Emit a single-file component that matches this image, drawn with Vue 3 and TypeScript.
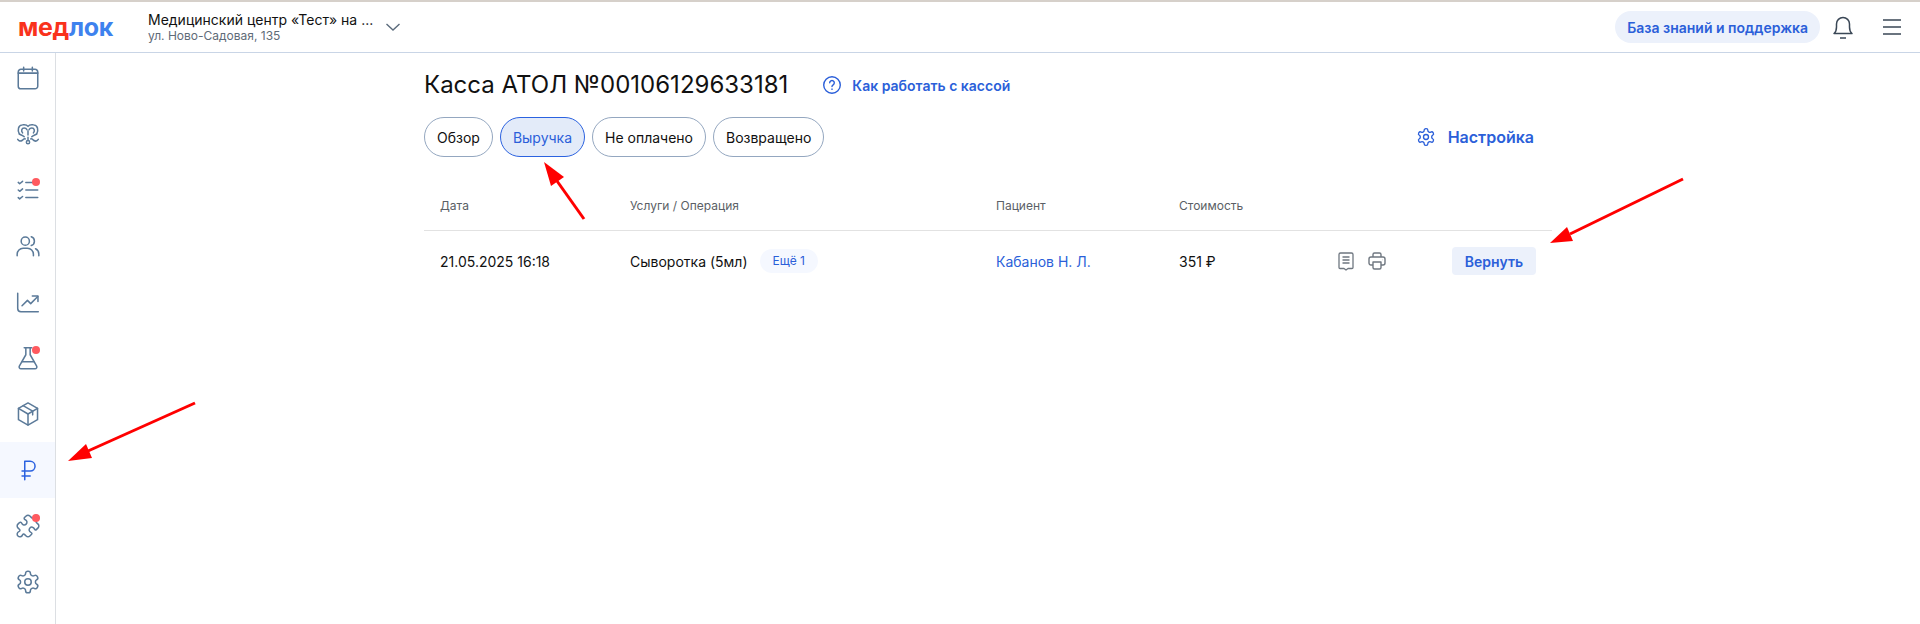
<template>
  <div class="page">
    <header class="topbar">
      <div class="logo"><span class="logo-red">мед</span><span class="logo-blue">лок</span></div>
      <div class="clinic">
        <div class="clinic-name">Медицинский центр «Тест» на ...</div>
        <div class="clinic-address">ул. Ново-Садовая, 135</div>
      </div>
      <svg class="chevron" width="16" height="10" viewBox="0 0 16 10" fill="none" stroke="#5b6b7c" stroke-width="1.4">
        <path d="M1.5 2l6.5 6 6.5-6" />
      </svg>
      <div class="topbar-right">
        <button class="help-pill">База знаний и поддержка</button>
        <svg class="bell" width="24" height="26" viewBox="0 0 24 26" fill="none" stroke="#3a4756" stroke-width="1.5">
          <path d="M3 19.5c2-1.500 2.500-3.500 2.500-6.500V10a6.500 6.500 0 0 1 13 0v3c0 3 .5 5 2.500 6.500z" stroke-linejoin="round" />
          <path d="M9 24h6" />
        </svg>
        <svg class="burger" width="18" height="16" viewBox="0 0 18 16" fill="none" stroke="#3a4756" stroke-width="1.500">
          <path d="M0 1h18M0 8h18M0 15h18" />
        </svg>
      </div>
    </header>

    <div class="body">
      <aside class="sidebar">
        <div v-for="item in navItems" :key="item.id" class="nav-item" :class="{ active: item.id === 'money' }">
          <svg width="26" height="26" viewBox="0 0 24 24" fill="none" stroke="currentColor" stroke-width="1.4" stroke-linecap="round" stroke-linejoin="round">
            <path v-for="d in item.paths" :key="d" :d="d" />
            <circle v-if="item.id === 'users'" cx="9.500" cy="7.500" r="3.800" />
            <circle v-if="item.id === 'gear'" cx="12" cy="12" r="3" />
          </svg>
          <span v-if="item.dot" class="dot"></span>
        </div>
      </aside>

      <main class="main">
        <div class="content">
          <div class="title-row">
            <h1>Касса АТОЛ №00106129633181</h1>
            <a class="how-link">
              <svg width="20" height="20" viewBox="0 0 20 20" fill="none" stroke="#2b5fd9" stroke-width="1.400">
                <circle cx="10" cy="10" r="8.300" />
                <path d="M7.700 7.800a2.300 2.300 0 1 1 3.500 2c-.8.500-1.200.9-1.200 1.800" stroke-linecap="round" />
                <path d="M10 14v.4" stroke-linecap="round" />
              </svg>
              Как работать с кассой
            </a>
          </div>

          <div class="tabs-row">
            <div class="tabs">
              <button v-for="tab in tabs" :key="tab" class="tab" :class="{ selected: tab === 'Выручка' }">{{ tab }}</button>
            </div>
            <a class="settings">
              <svg width="20" height="20" viewBox="0 0 24 24" fill="none" stroke="#2b5fd9" stroke-width="1.600" stroke-linejoin="round">
                <path :d="gearPath" />
                <circle cx="12" cy="12" r="3" />
              </svg>
              Настройка
            </a>
          </div>

          <div class="table">
            <div class="row head">
              <div>Дата</div>
              <div>Услуги / Операция</div>
              <div>Пациент</div>
              <div>Стоимость</div>
              <div></div>
              <div></div>
            </div>
            <div class="row">
              <div>21.05.2025 16:18</div>
              <div class="service">Сыворотка (5мл) <span class="more">Ещё 1</span></div>
              <div class="patient">Кабанов Н. Л.</div>
              <div>351 ₽</div>
              <div class="actions">
                <svg width="18" height="20" viewBox="0 0 18 20" fill="none" stroke="#6f7780" stroke-width="1.300" stroke-linejoin="round">
                  <path d="M3.500 2h11a1.500 1.500 0 0 1 1.500 1.500V16.500a1 1 0 0 1-1 1h-4L9 19l-2-1.500H3a1 1 0 0 1-1-1V3.500A1.500 1.500 0 0 1 3.500 2z" />
                  <path d="M5.500 6h7M5.500 9h7M5.500 12h7" />
                </svg>
                <svg width="18" height="20" viewBox="0 0 18 20" fill="none" stroke="#6f7780" stroke-width="1.400" stroke-linejoin="round">
                  <path d="M5 6V3.500A1.500 1.500 0 0 1 6.500 2h5A1.500 1.500 0 0 1 13 3.500V6" />
                  <path d="M5 14H3a2 2 0 0 1-2-2V8a2 2 0 0 1 2-2h12a2 2 0 0 1 2 2v4a2 2 0 0 1-2 2h-2" />
                  <path d="M5 11h8v5.500A1.500 1.500 0 0 1 11.500 18h-5A1.500 1.500 0 0 1 5 16.500z" />
                  <path d="M14 8.800h.2" />
                </svg>
              </div>
              <div class="refund-cell"><button class="refund">Вернуть</button></div>
            </div>
          </div>
        </div>
      </main>
    </div>

    <!-- красные стрелки поверх скриншота -->
    <svg class="arrows" width="1920" height="624" viewBox="0 0 1920 624">
      <g fill="#ff0000" stroke="none">
        <path d="M68 461l18-17 6 14z" />
        <path d="M544 162l20 15-13 9z" />
        <path d="M1550 243l17-16 6 14z" />
      </g>
      <g stroke="#ff0000" stroke-width="3" fill="none">
        <path d="M195 403L88 451" />
        <path d="M584 219L557 181" />
        <path d="M1683 179L1570 234" />
      </g>
    </svg>
  </div>
</template>

<script setup lang="ts">
interface NavItem {
  id: string
  paths: string[]
  dot?: boolean
}

const gearPath =
  'M12.220 2h-.44a2 2 0 0 0-2 2v.18a2 2 0 0 1-1 1.730l-.43.25a2 2 0 0 1-2 0l-.15-.08a2 2 0 0 0-2.730.73l-.22.38a2 2 0 0 0 .73 2.730l.15.1a2 2 0 0 1 1 1.720v.51a2 2 0 0 1-1 1.740l-.15.09a2 2 0 0 0-.73 2.730l.22.38a2 2 0 0 0 2.730.73l.15-.08a2 2 0 0 1 2 0l.43.25a2 2 0 0 1 1 1.730V20a2 2 0 0 0 2 2h.44a2 2 0 0 0 2-2v-.18a2 2 0 0 1 1-1.730l.43-.25a2 2 0 0 1 2 0l.15.08a2 2 0 0 0 2.730-.73l.22-.39a2 2 0 0 0-.73-2.730l-.15-.08a2 2 0 0 1-1-1.740v-.5a2 2 0 0 1 1-1.740l.15-.09a2 2 0 0 0 .73-2.730l-.22-.38a2 2 0 0 0-2.730-.73l-.15.08a2 2 0 0 1-2 0l-.43-.25a2 2 0 0 1-1-1.730V4a2 2 0 0 0-2-2z'

const puzzlePath =
  'M19.439 7.850c-.049.322.059.648.289.878l1.568 1.568c.47.47.706 1.087.706 1.704s-.235 1.233-.706 1.704l-1.611 1.611a.98.98 0 0 1-.837.276c-.47-.07-.802-.48-.968-.925a2.501 2.501 0 1 0-3.214 3.214c.446.166.855.497.925.968a.979.979 0 0 1-.276.837l-1.61 1.61a2.404 2.404 0 0 1-1.705.707 2.402 2.402 0 0 1-1.704-.706l-1.568-1.568a1.026 1.026 0 0 0-.877-.29c-.493.074-.84.504-1.02.968a2.5 2.5 0 1 1-3.237-3.237c.464-.18.894-.527.967-1.02a1.026 1.026 0 0 0-.289-.877l-1.568-1.568A2.402 2.402 0 0 1 1.998 12c0-.617.236-1.234.706-1.704L4.230 8.770c.24-.24.581-.353.917-.303.515.077.877.528 1.073 1.010a2.5 2.5 0 1 0 3.259-3.259c-.482-.196-.933-.558-1.010-1.073-.05-.336.062-.676.303-.917l1.525-1.525A2.402 2.402 0 0 1 12 1.998c.617 0 1.234.236 1.704.706l1.568 1.568c.23.23.556.338.877.29.493-.074.84-.504 1.020-.968a2.5 2.5 0 1 1 3.237 3.237c-.464.18-.894.527-.967 1.020z'

const navItems: NavItem[] = [
  { id: 'calendar', paths: ['M5.500 4h13A2.500 2.500 0 0 1 21 6.500v13a2.500 2.500 0 0 1-2.500 2.500h-13A2.500 2.500 0 0 1 3 19.500v-13A2.500 2.500 0 0 1 5.500 4z', 'M3 7.500h18', 'M8 2v3.500M16 2v3.500'] },
  {
    id: 'teeth',
    paths: [
      'M4 12C2 8 3 4 7 3.500c2-.3 4 0 5 1.500 1-1.500 3-1.800 5-1.500 4 .5 5 4.500 3 8.500',
      'M7 11c-1.500-2-1-4.500 1.500-4.500 1 0 2 .5 2.500 1.500M17 11c1.500-2 1-4.500-1.500-4.500-1 0-2 .5-2.500 1.500',
      'M12 9v4',
      'M4 12c1.500 1 3 1 4.500 2.500M20 12c-1.500 1-3 1-4.500 2.500',
      'M2.500 17c1 1.500 2.500 2 4 1s1.500-2 3-1.500M21.500 17c-1 1.500-2.500 2-4 1s-1.500-2-3-1.500',
      'M12 15v3M10.500 19.500a1.500 1.500 0 1 0 3 0 1.500 1.500 0 1 0-3 0',
    ],
  },
  { id: 'tasks', dot: true, paths: ['M3 5l1.300 1.200L7 4', 'M3 12l1.300 1.200L7 11', 'M3 19l1.300 1.200L7 18', 'M10 5h11M10 12h11M10 19h11'] },
  { id: 'users', paths: ['M2 21v-1.500A5.500 5.500 0 0 1 7.500 14h4a5.500 5.500 0 0 1 5.500 5.500V21', 'M15 3.500a4.200 4.200 0 0 1 0 8', 'M19 14.500a5.500 5.500 0 0 1 3 5V21'] },
  { id: 'chart', paths: ['M2.500 4v14a3 3 0 0 0 3 3h16', 'M6.500 15.500l5-5 3 3L21 7', 'M16 6.500h5.200v5'] },
  { id: 'flask', dot: true, paths: ['M8.500 2.500h7', 'M10 2.500v6.500L4 19.500A1.700 1.700 0 0 0 5.500 22h13a1.700 1.700 0 0 0 1.500-2.500L14 9V2.500', 'M6.500 15.500h11'] },
  { id: 'box', paths: ['M12 1.800l8.800 5v10.400L12 22.200l-8.800-5V6.800z', 'M3.200 6.800L12 12l8.800-5.200', 'M12 12v10.200', 'M7.500 4.300l8.800 5v3.500'] },
  { id: 'money', paths: ['M9 21V4h5a4.500 4.500 0 0 1 0 9H6.500', 'M6.500 17.500h7.500'] },
  { id: 'puzzle', dot: true, paths: [puzzlePath] },
  { id: 'gear', paths: [gearPath] },
]

const tabs: string[] = ['Обзор', 'Выручка', 'Не оплачено', 'Возвращено']
</script>

<style scoped>
.page {
  position: relative;
  width: 1920px;
  height: 624px;
  overflow: hidden;
  background: #fff;
  color: #111;
  font-family: Inter, "Noto Sans", sans-serif;
  font-size: 14px;
}

.topbar {
  display: flex;
  align-items: center;
  height: 53px;
  box-sizing: border-box;
  border-top: 2px solid #d6d0ca;
  border-bottom: 1px solid #c9d5e6;
  padding: 0 19px 0 18px;
}

.logo {
  width: 130px;
  font-size: 25px;
  font-weight: 700;
  line-height: 1;
  letter-spacing: -0.3px;
}

.logo-red {
  color: #f9321c;
}

.logo-blue {
  color: #3e82ee;
}

.clinic-name {
  font-size: 14px;
  line-height: 18px;
}

.clinic-address {
  font-size: 12px;
  line-height: 14px;
  color: #5f6b78;
}

.chevron {
  margin-left: 12px;
}

.topbar-right {
  display: flex;
  align-items: center;
  margin-left: auto;
}

.help-pill {
  height: 32px;
  padding: 0 12px;
  border: none;
  border-radius: 16px;
  background: #ecf1fb;
  color: #2b5fd9;
  font: 600 14px Inter, sans-serif;
}

.bell {
  margin-left: 11px;
}

.burger {
  margin-left: 28px;
}

.body {
  display: flex;
  height: 571px;
}

.sidebar {
  flex: none;
  width: 56px;
  box-sizing: border-box;
  border-right: 1px solid #dcdfe3;
}

.nav-item {
  position: relative;
  display: flex;
  align-items: center;
  justify-content: center;
  height: 56px;
  color: #5b7a99;
}

.nav-item:first-child {
  margin-top: -3px;
}

.nav-item.active {
  background: #f5f8ff;
  color: #2b62e0;
}

.dot {
  position: absolute;
  top: 16px;
  left: 32px;
  width: 8px;
  height: 8px;
  border-radius: 50%;
  background: #ff5a5f;
}

.main {
  flex: 1;
}

.content {
  width: 1128px;
  margin: 0 auto;
}

.title-row {
  display: flex;
  align-items: center;
  height: 64px;
}

h1 {
  margin: 0;
  font-size: 24px;
  font-weight: 400;
  line-height: 1.2;
}

.how-link {
  display: flex;
  align-items: center;
  gap: 10px;
  margin-left: 34px;
  color: #2b5fd9;
  font-weight: 600;
}

.tabs-row {
  display: flex;
  align-items: center;
  justify-content: space-between;
  padding-right: 18px;
}

.tabs {
  display: flex;
  gap: 7px;
}

.tab {
  height: 40px;
  padding: 0 12px;
  border: 1px solid #94a7c0;
  border-radius: 20px;
  background: #fff;
  color: #111;
  font: 400 14px Inter, sans-serif;
}

.tab.selected {
  border-color: #2b62e0;
  background: #e3ebf9;
  color: #2b5fd9;
}

.settings {
  display: flex;
  align-items: center;
  gap: 12px;
  color: #2b5fd9;
  font-size: 16px;
  font-weight: 600;
}

.table {
  margin-top: 14px;
}

.row {
  display: grid;
  grid-template-columns: 190px 366px 183px 158px 113px 1fr;
  align-items: center;
  height: 60px;
  padding: 0 16px;
}

.row.head {
  box-sizing: border-box;
  height: 60px;
  padding-top: 9px;
  border-bottom: 1px solid #e2e2e2;
  color: #5b5f66;
  font-size: 12px;
}

.service {
  display: flex;
  align-items: center;
  gap: 12px;
}

.more {
  padding: 0 13px;
  border-radius: 12px;
  background: #f5f8ff;
  color: #2b5fd9;
  font-size: 12px;
  line-height: 24px;
}

.patient {
  color: #2b5fd9;
}

.actions {
  display: flex;
  gap: 13px;
}

.refund-cell {
  display: flex;
  justify-content: flex-end;
}

.refund {
  height: 28px;
  width: 84px;
  border: none;
  border-radius: 4px;
  background: #ecf1fb;
  color: #2b5fd9;
  font: 600 14px Inter, sans-serif;
}

.arrows {
  position: absolute;
  top: 0;
  left: 0;
  pointer-events: none;
}
</style>
